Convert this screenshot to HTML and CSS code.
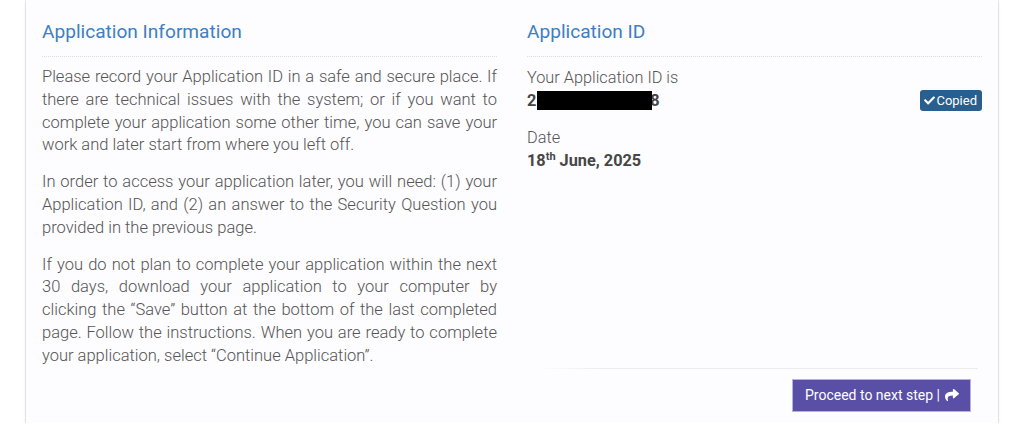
FILE: index.html
```html
<!DOCTYPE html>
<html lang="en">
<head>
<meta charset="utf-8">
<title>Application Information</title>
<link rel="stylesheet" href="styles.css">
</head>
<body>
<div class="card">
  <div class="row">
    <section class="col">
      <h2 class="title">Application Information</h2>
      <p>Please record your Application ID in a safe and secure place. If there are technical issues with the system; or if you want to complete your application some other time, you can save your work and later start from where you left off.</p>
      <p>In order to access your application later, you will need: (1) your Application ID, and (2) an answer to the Security Question you provided in the previous page.</p>
      <p class="last">If you do not plan to complete your application within the next 30 days, download your application to your computer by clicking the “Save” button at the bottom of the last completed page. Follow the instructions. When you are ready to complete your application, select “Continue Application”.</p>
    </section>
    <section class="col">
      <h2 class="title">Application ID</h2>
      <div class="field">
        <div class="label">Your Application ID is</div>
        <div class="value id-row">
          <span class="id">2<span class="redact"></span>8</span>
          <span class="badge"><svg class="check" viewBox="0 0 512 512"><path d="M173.898 439.404l-166.4-166.4c-9.997-9.997-9.997-26.206 0-36.204l36.203-36.204c9.997-9.998 26.207-9.998 36.204 0L192 312.69 432.095 72.596c9.997-9.997 26.206-9.997 36.204 0l36.203 36.204c9.997 9.997 9.997 26.206 0 36.204l-294.4 294.401c-9.998 9.997-26.207 9.997-36.204-.001z"/></svg>Copied</span>
        </div>
      </div>
      <div class="field">
        <div class="label">Date</div>
        <div class="value">18<sup>th</sup> June, 2025</div>
      </div>
    </section>
  </div>
  <div class="footer">
    <button class="btn" type="button">Proceed to next step | <svg class="share" viewBox="0 0 512 512"><path d="M503.691 189.836L327.687 37.851C312.281 24.546 288 35.347 288 56.015v80.053C127.371 137.907 0 170.1 0 322.326c0 61.441 39.581 122.309 83.333 154.132 13.653 9.931 33.111-2.533 28.077-18.631C66.066 312.814 132.917 274.316 288 272.085V360c0 20.7 24.3 31.453 39.687 18.164l176.004-152c11.071-9.562 11.086-26.753 0-36.328z"/></svg></button>
  </div>
</div>
</body>
</html>
```

FILE: styles.css
```css
html, body {
  margin: 0;
  padding: 0;
  background: #ffffff;
}

body {
  font-family: Roboto, "Liberation Sans", sans-serif;
  color: #595959;
  overflow: hidden;
}

.card {
  width: 972px;
  margin: 0 0 0 26px;
  box-sizing: border-box;
  padding: 0 16px 11px;
  background: #fdfcfe;
  box-shadow: 0 2px 3px rgba(0, 0, 0, 0.1), -1px 0 0 #ebebeb, 1px 0 0 #ebebeb, 0 1px 0 #e6e6e6;
}

.row {
  display: grid;
  grid-template-columns: 455px 455px;
  column-gap: 30px;
}

.title {
  margin: 20px 0 9px;
  padding: 0 0 12px;
  font-size: 19.1px;
  font-weight: 400;
  line-height: 24px;
  color: #3d7fc3;
  border-bottom: 1px dotted #dcdcdc;
}

.col p {
  margin: 0 0 14px;
  font-size: 16.5px;
  font-weight: 300;
  line-height: 22.8px;
  text-align: justify;
  color: #555;
}

.col p.last {
  margin-bottom: 0;
}

.field {
  margin-bottom: 14px;
  font-size: 16.3px;
  line-height: 23px;
}

.label {
  font-weight: 300;
  color: #555;
}

.value {
  font-weight: 700;
  color: #464646;
}

.value sup {
  font-size: 11px;
  line-height: 0;
  vertical-align: 6px;
}

.id-row {
  display: flex;
  align-items: center;
  justify-content: space-between;
}

.id {
  display: inline-flex;
  align-items: center;
}

.redact {
  display: inline-block;
  width: 115px;
  height: 19px;
  background: #000;
  margin: 0 -2px 0 1px;
  position: relative;
  z-index: 1;
}

.badge {
  display: inline-flex;
  align-items: center;
  height: 21px;
  padding: 0 5px 0 4px;
  background: #295f8f;
  color: #fff;
  border-radius: 3px;
  font-size: 13px;
  font-weight: 400;
  line-height: 21px;
}

.check {
  width: 11px;
  height: 11px;
  fill: #fff;
  margin-right: 1px;
}

.footer {
  display: flex;
  justify-content: flex-end;
  margin: 0 4px 0 498px;
  padding: 10px 7px 0 0;
  border-top: 1px solid transparent;
  border-image: linear-gradient(to right, rgba(236, 236, 240, 0), #ececf0 60px) 1;
}

.btn {
  display: inline-flex;
  align-items: center;
  height: 33px;
  padding: 0 11px 0 12px;
  background: #5a4fa6;
  border: 1px solid #b7b1dd;
  color: #fff;
  font-family: Roboto, "Liberation Sans", sans-serif;
  font-size: 14px;
  font-weight: 400;
  cursor: pointer;
}

.share {
  width: 14px;
  height: 14px;
  fill: #fff;
  margin-left: 5px;
}
```
